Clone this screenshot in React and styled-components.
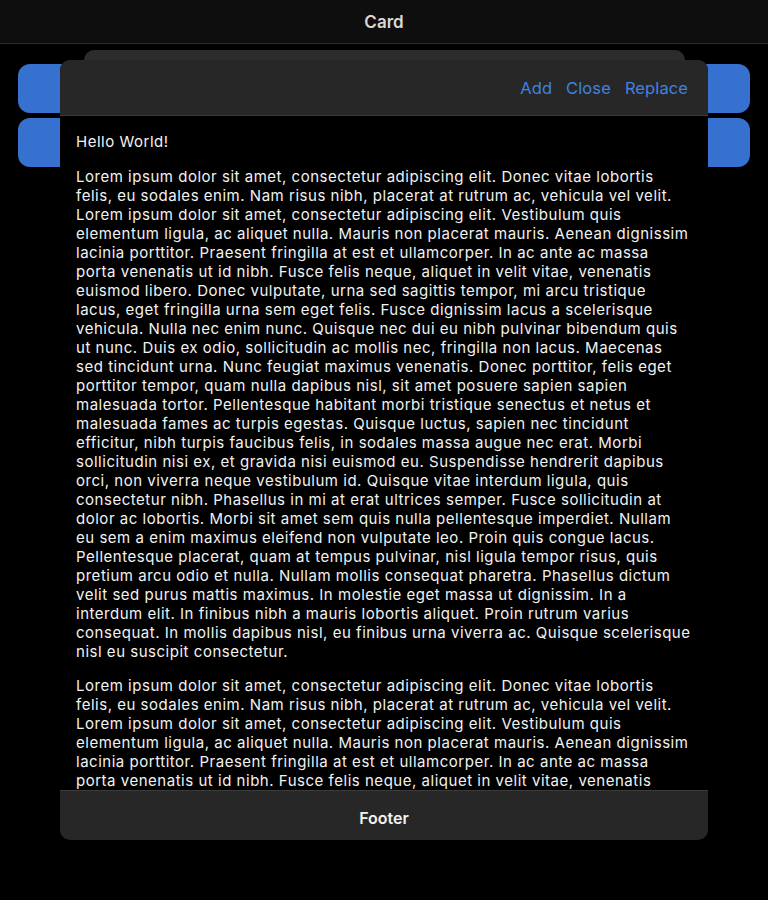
import React from "react";
import styled, { createGlobalStyle } from "styled-components";

const Global = createGlobalStyle`
  html, body { margin: 0; padding: 0; background: #000; }
  body { font-family: Inter, "Liberation Sans", sans-serif; color: #fff; overflow: hidden; }
  * { box-sizing: border-box; }
`;

const Page = styled.div`
  position: relative;
  width: 768px;
  height: 900px;
  background: #000;
  overflow: hidden;
`;

const NavBar = styled.div`
  height: 44px;
  background: #0e0e0e;
  border-bottom: 1px solid #2a2a2a;
  display: flex;
  align-items: center;
  justify-content: center;
  font-size: 17px;
  font-weight: 600;
  color: #d8d8d8;
`;

const ButtonList = styled.div`
  display: flex;
  flex-direction: column;
  gap: 5px;
  padding: 20px 18px;
`;

const BlueButton = styled.div`
  height: 49px;
  border-radius: 12px;
  background: #3671cf;
`;

const BackSheet = styled.div`
  position: absolute;
  top: 50px;
  left: 84px;
  right: 83px;
  height: 200px;
  border-radius: 10px 10px 0 0;
  background: #2c2c2c;
`;

const Modal = styled.div`
  position: absolute;
  top: 60px;
  left: 60px;
  width: 648px;
  height: 780px;
  border-radius: 10px;
  overflow: hidden;
  display: flex;
  flex-direction: column;
  background: #000;
`;

const ModalHeader = styled.div`
  height: 56px;
  flex: none;
  background: #272727;
  border-bottom: 1px solid #3c3c3c;
  display: flex;
  align-items: center;
  justify-content: flex-end;
  gap: 14px;
  padding: 2px 20px 0 0;
`;

const HeaderButton = styled.span`
  font-size: 16.5px;
  color: #3f82e0;
  line-height: 1;
  letter-spacing: 0.1px;
`;

const Body = styled.div`
  flex: 1;
  overflow: hidden;
  padding: 16px 16px 0 16px;
  font-size: 15px;
  line-height: 19px;
  letter-spacing: 0.52px;
  color: #f2f2f2;
`;

const Para = styled.p`
  margin: 0 0 ${(p) => (p.$lead ? 16 : 15)}px 0;
`;

const Footer = styled.div`
  height: 50px;
  flex: none;
  background: #272727;
  border-top: 1px solid #3c3c3c;
  display: flex;
  align-items: center;
  justify-content: center;
  padding-top: 4px;
  font-size: 16px;
  font-weight: 600;
  color: #f2f2f2;
`;

const LOREM =
  "Lorem ipsum dolor sit amet, consectetur adipiscing elit. Donec vitae lobortis felis, eu sodales enim. Nam risus nibh, placerat at rutrum ac, vehicula vel velit. Lorem ipsum dolor sit amet, consectetur adipiscing elit. Vestibulum quis elementum ligula, ac aliquet nulla. Mauris non placerat mauris. Aenean dignissim lacinia porttitor. Praesent fringilla at est et ullamcorper. In ac ante ac massa porta venenatis ut id nibh. Fusce felis neque, aliquet in velit vitae, venenatis euismod libero. Donec vulputate, urna sed sagittis tempor, mi arcu tristique lacus, eget fringilla urna sem eget felis. Fusce dignissim lacus a scelerisque vehicula. Nulla nec enim nunc. Quisque nec dui eu nibh pulvinar bibendum quis ut nunc. Duis ex odio, sollicitudin ac mollis nec, fringilla non lacus. Maecenas sed tincidunt urna. Nunc feugiat maximus venenatis. Donec porttitor, felis eget porttitor tempor, quam nulla dapibus nisl, sit amet posuere sapien sapien malesuada tortor. Pellentesque habitant morbi tristique senectus et netus et malesuada fames ac turpis egestas. Quisque luctus, sapien nec tincidunt efficitur, nibh turpis faucibus felis, in sodales massa augue nec erat. Morbi sollicitudin nisi ex, et gravida nisi euismod eu. Suspendisse hendrerit dapibus orci, non viverra neque vestibulum id. Quisque vitae interdum ligula, quis consectetur nibh. Phasellus in mi at erat ultrices semper. Fusce sollicitudin at dolor ac lobortis. Morbi sit amet sem quis nulla pellentesque imperdiet. Nullam eu sem a enim maximus eleifend non vulputate leo. Proin quis congue lacus. Pellentesque placerat, quam at tempus pulvinar, nisl ligula tempor risus, quis pretium arcu odio et nulla. Nullam mollis consequat pharetra. Phasellus dictum velit sed purus mattis maximus. In molestie eget massa ut dignissim. In a interdum elit. In finibus nibh a mauris lobortis aliquet. Proin rutrum varius consequat. In mollis dapibus nisl, eu finibus urna viverra ac. Quisque scelerisque nisl eu suscipit consectetur.";

export default function App() {
  return (
    <Page>
      <Global />
      <NavBar>Card</NavBar>
      <ButtonList>
        <BlueButton />
        <BlueButton />
      </ButtonList>
      <BackSheet />
      <Modal>
        <ModalHeader>
          <HeaderButton>Add</HeaderButton>
          <HeaderButton>Close</HeaderButton>
          <HeaderButton>Replace</HeaderButton>
        </ModalHeader>
        <Body>
          <Para $lead>Hello World!</Para>
          <Para>{LOREM}</Para>
          <Para>{LOREM}</Para>
        </Body>
        <Footer>Footer</Footer>
      </Modal>
    </Page>
  );
}
